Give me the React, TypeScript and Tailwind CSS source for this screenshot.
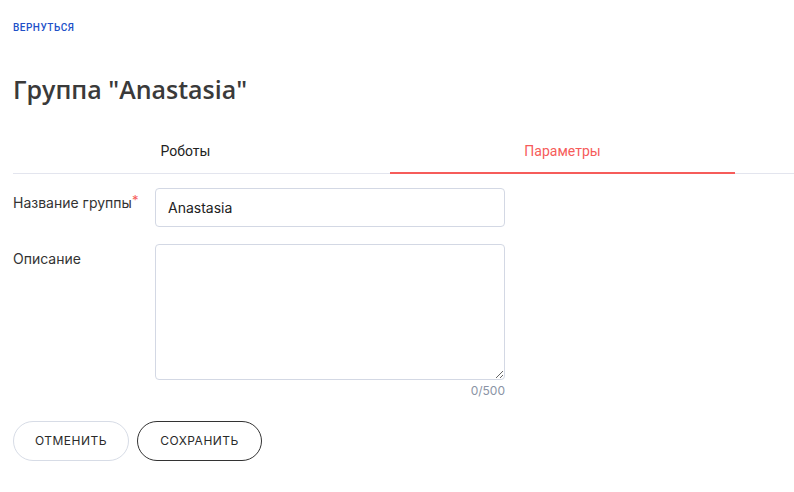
import React from "react";

export default function App() {
  return (
    <div className="min-h-[492px] w-[794px] bg-white text-[#333] [font-family:Inter,Roboto,sans-serif]">
      <div className="pl-[13px] pt-[22px] leading-[12px]">
        <a className="block text-[10px] font-medium tracking-[0.05em] text-[#2150c8] leading-[12px] [font-family:Roboto,sans-serif]">ВЕРНУТЬСЯ</a>
      </div>
      <h1 className="pl-[13px] mt-[40px] text-[25px] font-semibold leading-[30px] text-[#3a3a3a] [font-family:'Open_Sans',sans-serif]">
        Группа "Anastasia"
      </h1>
      <div className="mt-[27px] ml-[13px] flex border-b border-[#e3e5ee] [font-family:Roboto,sans-serif]">
        <div className="flex w-[345px] justify-center pb-[11px] pt-[10px] text-[14px] text-[#222]">Роботы</div>
        <div className="ml-[32px] -mb-px flex w-[345px] justify-center border-b-2 border-[#f65c5a] pb-[10px] pt-[10px] text-[14px] text-[#f65c5a]">Параметры</div>
      </div>
      <div className="mt-[14px] ml-[13px] flex flex-col">
        <div className="flex">
          <label className="w-[142px] pt-[7px] text-[14px] leading-[16px] text-[#333]">
            Название группы<span className="relative -top-[3px] text-[#f65c5a] align-top text-[13px]">*</span>
          </label>
          <div className="flex h-[39px] w-[350px] items-center rounded-[4px] border border-[#d3d8e4] px-[12px] text-[14px] text-[#222]">
            Anastasia
          </div>
        </div>
        <div className="mt-[17px] flex">
          <label className="w-[142px] pt-[7px] text-[14px] leading-[16px] text-[#333]">Описание</label>
          <div className="flex w-[350px] flex-col">
            <textarea className="h-[136px] w-[350px] rounded-[4px] border border-[#d3d8e4] outline-none" />
            <div className="mt-[3px] text-right text-[12px] leading-[16px] text-[#8a93a5]">0/500</div>
          </div>
        </div>
        <div className="mt-[22px] flex gap-[8px]">
          <button className="h-[40px] w-[116px] rounded-full border border-[#d7dce6] text-[12px] font-normal tracking-[0.04em] text-[#2a2a2a]">
            ОТМЕНИТЬ
          </button>
          <button className="h-[40px] w-[125px] rounded-full border border-[#333] text-[12px] font-normal tracking-[0.04em] text-[#2a2a2a]">
            СОХРАНИТЬ
          </button>
        </div>
      </div>
    </div>
  );
}
